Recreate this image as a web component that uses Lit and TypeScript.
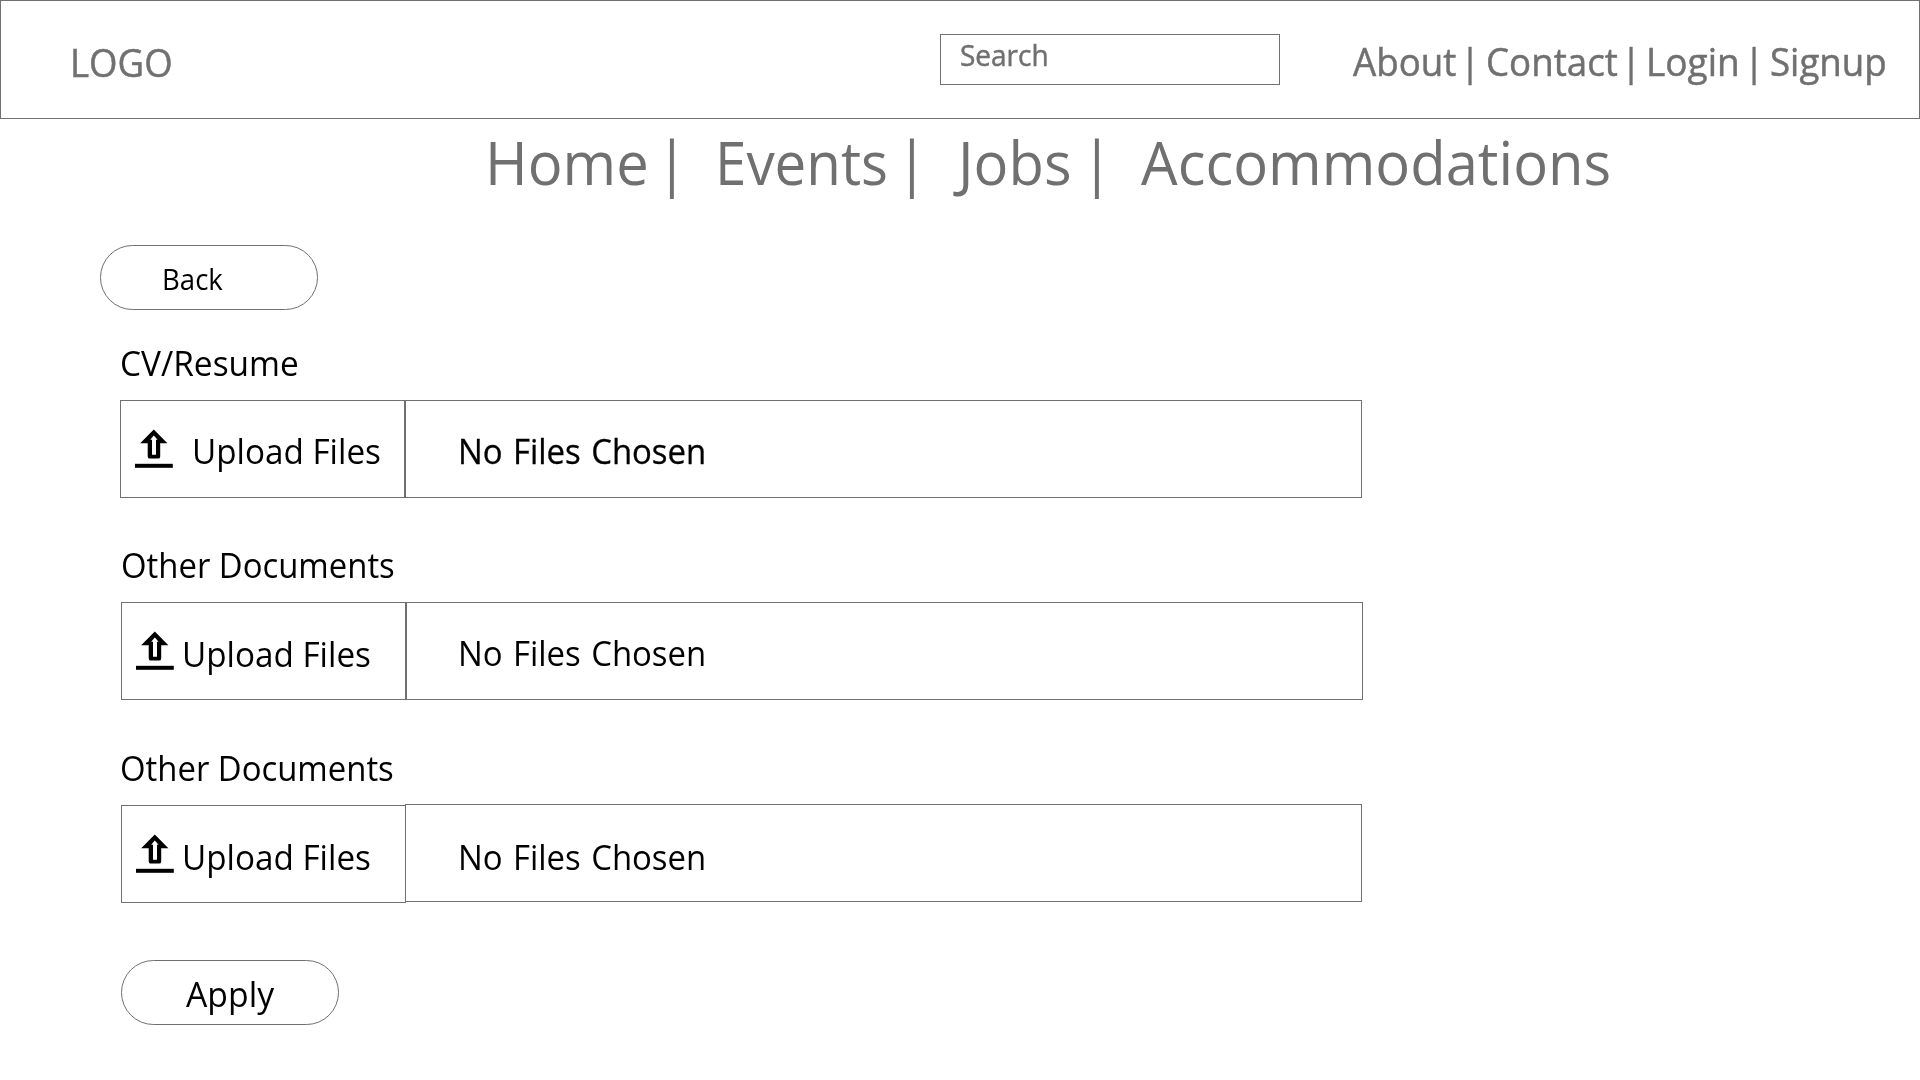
import { LitElement, html, css, svg } from "lit";
import { customElement, property } from "lit/decorators.js";

const uploadIcon = svg`
  <path fill-rule="evenodd" d="M18.8 0.6 32.4 14.2H25.2V27.4Q25.2 29.6 23 29.6H14.9Q12.7 29.6 12.7 27.4V14.2H5.2Z
    M18.8 6.6 15.2 10.8H17V25.8H21V10.8H22.6Z"/>
  <rect x="0" y="34.8" width="37.8" height="4"/>`;

/* Condenses a run of text horizontally; --k is the width factor. */
const narrow = css`
  .narrow {
    display: inline-block;
    transform: scaleX(var(--k, 0.953));
    transform-origin: 0 0;
  }
`;

@customElement("upload-field")
class UploadField extends LitElement {
  @property() label = "";

  static styles = [
    narrow,
    css`
      :host {
        display: block;
        font-size: 35px;
        white-space: nowrap;
      }
      .label {
        line-height: 65px;
        height: 65px;
        padding-left: var(--label-x, 119.8px);
        --k: var(--label-k, 0.939);
      }
      .row {
        display: flex;
        align-items: flex-start;
        padding-left: var(--row-x, 121px);
        margin-top: var(--row-gap, 5px);
      }
      .cell {
        box-sizing: border-box;
        height: 98px;
        border: 1px solid #707070;
        display: flex;
        align-items: flex-start;
      }
      .pick {
        width: 285px;
        padding-left: 14px;
        margin-top: var(--pick-drop, 0px);
        --k: 0.95;
      }
      .icon {
        width: 38px;
        height: 40px;
        margin-top: 28px;
        flex: none;
        filter: blur(0.45px);
      }
      .action {
        margin-left: var(--action-gap, 8px);
        line-height: var(--action-line, 102px);
      }
      .status {
        width: 957px;
        margin-left: var(--status-shift, 0px);
        padding-left: var(--status-pad, 52px);
        line-height: var(--status-line, 99px);
        word-spacing: 2px;
        -webkit-text-stroke: var(--status-weight, 0px) #000;
        --k: 0.94;
      }
    `,
  ];

  render() {
    return html`
      <div class="label"><span class="narrow">${this.label}</span></div>
      <div class="row">
        <div class="cell pick">
          <svg class="icon" viewBox="0 0 38 40">${uploadIcon}</svg>
          <span class="action narrow">Upload Files</span>
        </div>
        <div class="cell status"><span class="narrow">No Files Chosen</span></div>
      </div>
    `;
  }
}

@customElement("app-root")
class AppRoot extends LitElement {
  static styles = [
    narrow,
    css`
      :host {
        display: block;
        width: 1920px;
        height: 1080px;
        overflow: hidden;
        background: #fff;
        color: #000;
        font-family: "Open Sans", "Noto Sans", sans-serif;
        white-space: nowrap;
      }
      .header {
        box-sizing: border-box;
        height: 119px;
        border: 1px solid #707070;
        padding-left: 68.5px;
        display: grid;
        grid-template-columns: 870.5px 340px 72.7px 1fr;
        align-items: start;
        color: #707070;
        -webkit-text-stroke: 0.5px #707070;
      }
      .logo {
        font-size: 39px;
        line-height: 122px;
        --k: 0.938;
      }
      .search {
        box-sizing: border-box;
        margin-top: 33px;
        height: 51px;
        border: 1px solid #707070;
        padding-left: 19px;
        font-size: 29.5px;
        line-height: 39px;
        --k: 0.948;
      }
      .links {
        grid-column: 4;
        display: grid;
        grid-template-columns: 107.5px 25.5px 135.5px 24.5px 98px 26px 1fr;
        justify-items: start;
        font-size: 38.5px;
        line-height: 121px;
      }
      .login {
        --k: 0.962;
      }
      .menu {
        height: 86px;
        padding-left: 485px;
        display: grid;
        grid-template-columns: 171.4px 58.6px 180.6px 62.8px 122.6px 60px 1fr;
        justify-items: start;
        font-size: 59.5px;
        line-height: 86px;
        color: #707070;
        --k: 0.974;
      }
      .events {
        --k: 0.949;
      }
      .pill {
        box-sizing: border-box;
        width: 218px;
        height: 65px;
        border: 1px solid #707070;
        border-radius: 32.5px;
        line-height: 65px;
      }
      .back {
        margin: 40px 0 0 100px;
        padding-left: 61px;
        font-size: 29.5px;
        --k: 0.935;
      }
      .apply {
        margin: 57px 0 0 121px;
        padding-left: 64px;
        font-size: 35px;
        --k: 0.965;
      }
      .resume {
        margin-top: 20px;
        --label-k: 0.955;
        --row-x: 120px;
        --action-gap: 18.8px;
        --action-line: 99px;
        --status-weight: 0.3px;
      }
      .second {
        margin-top: 34px;
        --label-x: 120.8px;
        --status-pad: 51px;
      }
      .third {
        margin-top: 35px;
        --row-gap: 4px;
        --pick-drop: 1px;
        --status-shift: -1px;
        --status-line: 104px;
      }
    `,
  ];

  render() {
    return html`
      <header class="header">
        <div class="logo"><span class="narrow">LOGO</span></div>
        <div class="search"><span class="narrow">Search</span></div>
        <nav class="links">
          <span class="narrow">About</span><span class="narrow">|</span>
          <span class="narrow">Contact</span><span class="narrow">|</span>
          <span class="narrow login">Login</span><span class="narrow">|</span>
          <span class="narrow">Signup</span>
        </nav>
      </header>
      <nav class="menu">
        <span class="narrow">Home</span><span class="narrow">|</span>
        <span class="narrow events">Events</span><span class="narrow">|</span>
        <span class="narrow">Jobs</span><span class="narrow">|</span>
        <span class="narrow">Accommodations</span>
      </nav>
      <div class="pill back"><span class="narrow">Back</span></div>
      <upload-field class="resume" label="CV/Resume"></upload-field>
      <upload-field class="second" label="Other Documents"></upload-field>
      <upload-field class="third" label="Other Documents"></upload-field>
      <div class="pill apply"><span class="narrow">Apply</span></div>
    `;
  }
}
